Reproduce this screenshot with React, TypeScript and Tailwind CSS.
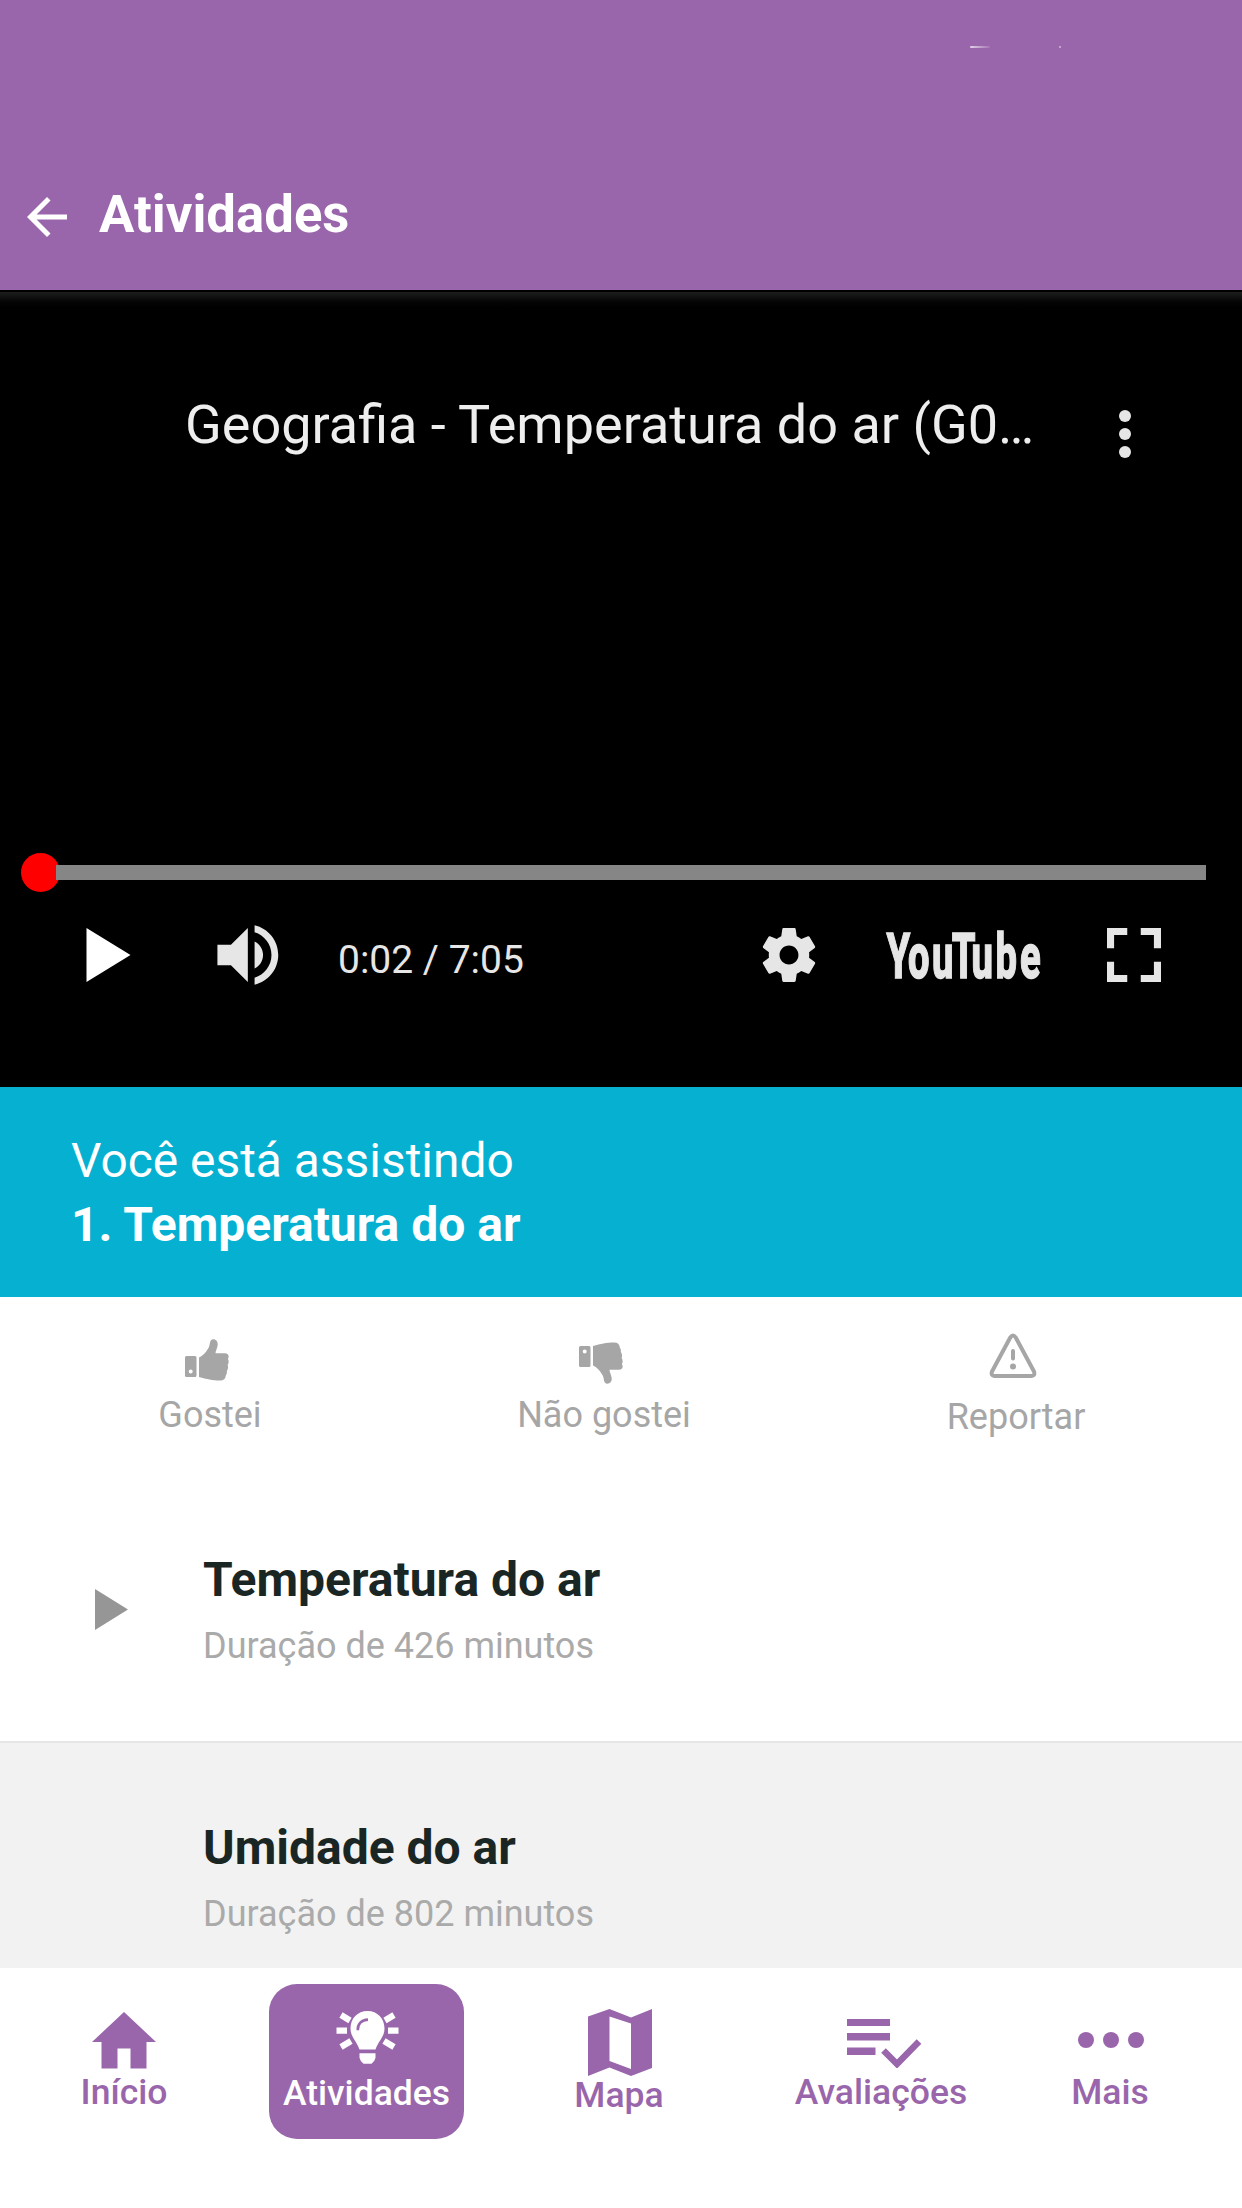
import React from 'react';

interface Lesson {
  title: string;
  minutes: number;
  playing?: boolean;
}

const lessons: Lesson[] = [
  { title: 'Temperatura do ar', minutes: 426, playing: true },
  { title: 'Umidade do ar', minutes: 802 },
];

const Header: React.FC = () => (
  <header className="h-[290px] bg-[#9a66ab] pt-[46px] text-white">
    {/* faint status bar remnants */}
    <div className="flex h-[2px] items-center pl-[970px]">
      <span className="h-[2px] w-[20px] rounded-full bg-linear-to-r from-white/70 to-white/10" />
      <span className="ml-[69px] h-[2px] w-[2px] bg-white/40" />
    </div>
    <div className="flex items-start pl-[17px] pt-[139px]">
      <button type="button" aria-label="Voltar">
        <svg className="h-[60px] w-[60px]" viewBox="0 0 24 24" fill="currentColor">
          <path d="M20 11H7.83l5.59-5.59L12 4l-8 8 8 8 1.41-1.41L7.83 13H20v-2z" />
        </svg>
      </button>
      <h1 className="-mt-[3px] ml-[22px] text-[52.7px] font-bold leading-[60px]">Atividades</h1>
    </div>
  </header>
);

const Player: React.FC = () => (
  <section className="h-[797px] border-t-2 border-black bg-black text-[#e6e6e6]">
    <div className="h-[20px] bg-linear-to-b from-[#1e1e1e] to-black" />

    <div className="flex h-[170px] items-start pl-[185px] pt-[86px]">
      <h2 className="-mt-[5px] w-[904px] whitespace-nowrap text-[54px] leading-[64px] text-[#eeeeee]">Geografia - Temperatura do ar (G0…</h2>
      <svg className="h-[72px] w-[72px]" viewBox="0 0 24 24" fill="currentColor">
        <circle cx="12" cy="6" r="2" />
        <circle cx="12" cy="12" r="2" />
        <circle cx="12" cy="18" r="2" />
      </svg>
    </div>

    <div className="mt-[371px] flex h-[39px] items-center pl-[21px]">
      <div className="h-[39px] w-[39px] rounded-full bg-[#ff0000]" />
      <div className="-ml-1 h-[15px] w-[1150px] bg-[#868686]" />
    </div>

    <div className="mt-[23px] flex h-[80px] items-center">
      <svg className="ml-[86px] h-[54px] w-[45px] shrink-0 text-white" viewBox="0 0 45 54" fill="currentColor">
        <path d="M0.5 0v54L44.5 27z" />
      </svg>
      <svg className="ml-[86px] h-[60px] w-[62px] shrink-0" viewBox="7.9 9.12 18.3 17.76" fill="currentColor">
        <path d="M8,21 L12,21 L17,26 L17,10 L12,15 L8,15 L8,21 Z M19,14 L19,22 C20.48,21.32 21.5,19.77 21.5,18 C21.5,16.26 20.48,14.74 19,14 Z M19,11.29 C21.89,12.15 24,14.83 24,18 C24,21.17 21.89,23.85 19,24.71 L19,26.77 C23.01,25.86 26,22.28 26,18 C26,13.72 23.01,10.14 19,9.23 L19,11.29 Z" />
      </svg>
      <span className="ml-[59px] mt-[10px] w-[424px] shrink-0 text-[39px] leading-[48px]">0:02 / 7:05</span>
      <svg className="h-[54px] w-[54px] shrink-0" viewBox="10 10 16 16" fill="currentColor">
        <path d="m 23.94,18.78 c .03,-0.25 .05,-0.51 .05,-0.78 0,-0.27 -0.02,-0.52 -0.05,-0.78 l 1.68,-1.32 c .15,-0.12 .19,-0.33 .09,-0.51 l -1.6,-2.76 c -0.09,-0.17 -0.31,-0.24 -0.48,-0.17 l -1.99,.8 c -0.41,-0.32 -0.86,-0.58 -1.35,-0.78 l -0.30,-2.12 c -0.02,-0.19 -0.19,-0.33 -0.39,-0.33 l -3.2,0 c -0.2,0 -0.36,.14 -0.39,.33 l -0.30,2.12 c -0.48,.2 -0.93,.47 -1.35,.78 l -1.99,-0.8 c -0.18,-0.07 -0.39,0 -0.48,.17 l -1.6,2.76 c -0.10,.17 -0.05,.39 .09,.51 l 1.68,1.32 c -0.03,.25 -0.05,.52 -0.05,.78 0,.26 .02,.52 .05,.78 l -1.68,1.32 c -0.15,.12 -0.19,.33 -0.09,.51 l 1.6,2.76 c .09,.17 .31,.24 .48,.17 l 1.99,-0.8 c .41,.32 .86,.58 1.35,.78 l .30,2.12 c .02,.19 .19,.33 .39,.33 l 3.2,0 c .2,0 .36,-0.14 .39,-0.33 l .30,-2.12 c .48,-0.2 .93,-0.47 1.35,-0.78 l 1.99,.8 c .18,.07 .39,0 .48,-0.17 l 1.6,-2.76 c .09,-0.17 .05,-0.39 -0.09,-0.51 l -1.68,-1.32 z m -5.94,2.01 c -1.54,0 -2.8,-1.25 -2.8,-2.8 0,-1.54 1.25,-2.8 2.8,-2.8 1.54,0 2.8,1.25 2.8,2.8 0,1.54 -1.25,2.8 -2.8,2.8 z" />
      </svg>
      {/* condensed wordmark: glyphs squeezed and spaced one by one */}
      <svg className="ml-[65px] h-[80px] w-[166px] shrink-0 overflow-visible" viewBox="0 0 166 80">
        <text
          transform="scale(0.6 1)"
          x="9 45 85 118 151 191 231.500"
          y="63"
          fill="currentColor"
          stroke="currentColor"
          strokeWidth="1.4"
          className="font-['Roboto',sans-serif] text-[63.5px] font-extrabold"
        >
          YouTube
        </text>
      </svg>
      <svg className="ml-[60px] h-[54px] w-[54px] shrink-0" viewBox="0 0 16 16" fill="currentColor">
        <path d="M0 0h6v2.1H2.1V6H0zM10 0h6v6h-2.1V2.1H10zM0 10h2.1v3.9H6V16H0zM13.9 10H16v6h-6v-2.1h3.9z" />
      </svg>
    </div>
  </section>
);

const NowWatching: React.FC = () => (
  <section className="h-[210px] bg-[#06b0d1] pl-[71px] pt-[42px] text-[48px] leading-[64px] text-white">
    <p className="text-[47.9px]">Você está assistindo</p>
    <p className="font-bold">1. Temperatura do ar</p>
  </section>
);

const Thumb: React.FC = () => (
  <>
    <path d="M1.5 17h8.500q1.500 0 1.500 1.500v18q0 1.500-1.500 1.500h-8.500q-1.500 0-1.500-1.500v-18q0-1.500 1.500-1.500zM5.700 30.500a2 2 0 1 0 0 4a2 2 0 1 0 0-4z" fillRule="evenodd" />
    <path d="M14 18.500c4-1.500 8-6.500 10-10.500c1.200-3 .5-7.500 4.200-7.700c3.500 0 5 3.200 4.400 6.200c-.5 3-2 5.500-2.100 7.800h9.500c3.500 0 4.500 3 2.900 5.700c1.200 2 .9 4.500-.3 6c.9 2 .3 4.500-.8 5.900c.3 2-.2 3.400-1 4.500c-.4 3.500-2 5.100-5.500 5.100c-8.300 0-13.300-1.300-21.300-3.500z" />
  </>
);

const Feedback: React.FC = () => (
  <section className="flex h-[190px] text-[36px] leading-[44px] text-[#a6a6a6]">
    <button type="button" className="ml-[110px] flex w-[200px] flex-col items-center pt-[42px]">
      <svg className="mr-[6px] h-[42px] w-[44px]" viewBox="0 0 44 42" fill="currentColor">
        <Thumb />
      </svg>
      <span className="mt-[12px]">Gostei</span>
    </button>
    <button type="button" className="ml-[194px] flex w-[200px] flex-col items-center pt-[45px]">
      <svg className="mr-[6px] h-[42px] w-[44px]" viewBox="0 0 44 42" fill="currentColor">
        <g transform="matrix(1 0 0 -1 0 42)">
          <Thumb />
        </g>
      </svg>
      <span className="mt-[9px]">Não gostei</span>
    </button>
    <button type="button" className="ml-[212px] flex w-[200px] flex-col items-center pt-[36px]">
      <svg className="mr-[6px] h-[46px] w-[48px]" viewBox="0 0 48 46" fill="none" stroke="currentColor" strokeWidth="4" strokeLinejoin="round" strokeLinecap="round">
        <path d="M21.400 4.300Q24 .5 26.600 4.300L45 38.500Q46.300 43 42.500 43H5.500Q1.700 43 3 38.500z" />
        <path d="M24 18v7.500" />
        <circle cx="24" cy="33.500" r="3" fill="currentColor" stroke="none" />
      </svg>
      <span className="mt-[16px]">Reportar</span>
    </button>
  </section>
);

const LessonRow: React.FC<{ lesson: Lesson }> = ({ lesson }) => (
  <article className={lesson.playing ? 'flex h-[254px] pt-[61px]' : 'flex h-[227px] border-t-2 border-[#e6e6e6] bg-[#f2f2f2] pt-[73px]'}>
    <div className="w-[203px] shrink-0 pl-[95px] pt-[41px]">
      {lesson.playing && (
        <svg className="h-[41px] w-[33px]" viewBox="0 0 33 41" fill="#969696">
          <path d="M0 0v41L33 20.500z" />
        </svg>
      )}
    </div>
    <div>
      <h3 className="text-[48px] font-bold leading-[64px] text-[#1a2624]">{lesson.title}</h3>
      <p className="text-[36px] leading-[68px] text-[#aaaaaa]">{`Duração de ${lesson.minutes} minutos`}</p>
    </div>
  </article>
);

const BottomNav: React.FC = () => (
  <nav className="flex h-[240px] bg-white pt-[16px] text-[35.5px] font-medium leading-[44px] text-[#9a66ab]">
    <a className="ml-[26px] flex w-[196px] flex-col items-center pt-[28px]">
      <svg className="h-[57px] w-[64px]" viewBox="0 0 64 57" fill="currentColor">
        <path d="M32 0L64 30H54.500V56.500H38.500V36.500H25.500V56.500H9.500V30H0z" />
      </svg>
      <span className="mt-[1px]">Início</span>
    </a>
    <a className="ml-[47px] flex h-[155px] w-[195px] flex-col items-center rounded-[28px] bg-[#9a66ab] pt-[27px] text-white">
      <svg className="ml-[2px] h-[53px] w-[63px]" viewBox="0 0 63 53" fill="currentColor">
        <path d="M31.500 0C41.500 0 48.500 7.500 48.500 17.500C48.500 26 42.500 29.500 39.500 38.500H23.500C20.500 29.500 14.500 26 14.500 17.500C14.500 7.500 21.500 0 31.500 0z" />
        <path d="M23.500 42.300h16v4.500q-.8 4-4 6h-8q-3.200-2-4-6z" />
        <path d="M21.800 19.200C21.500 13 25.500 8.800 32 8.600" fill="none" stroke="#9a66ab" strokeWidth="2.600" />
        <g stroke="currentColor" strokeWidth="6.200">
          <path d="M.5 19.700H11M52 19.700H62.500M5 4l9 5.500M58 4l-9 5.500M5 36l10-6M58 36l-10-6" />
        </g>
      </svg>
      <span className="mt-[7px]">Atividades</span>
    </a>
    <a className="ml-[57px] flex w-[196px] flex-col items-center pt-[25px]">
      <svg className="ml-[2px] h-[67px] w-[64px]" viewBox="0 0 64 67" fill="currentColor">
        <path fillRule="evenodd" d="M0 7.500L21.500 0L43 8.500L64 0V59L43 67L21.500 58.500L0 67zM21.500 7.500V52L43 60V14.500z" />
      </svg>
      <span className="-mt-[3px]">Mapa</span>
    </a>
    <a className="ml-[64px] flex w-[200px] flex-col items-center pt-[35px]">
      <svg className="ml-[6px] h-[49px] w-[75px]" viewBox="0 0 75 49" fill="currentColor">
        <path d="M0 0h43v7H0zM0 14h43v7.500H0zM0 28.500h28.500v7.500H0z" />
        <path d="M36.500 31.500L50 45L72 22.500" fill="none" stroke="currentColor" strokeWidth="6.500" />
      </svg>
      <span className="mt-[2px]">Avaliações</span>
    </a>
    <a className="ml-[29px] flex w-[200px] flex-col items-center pt-[47px]">
      <svg className="ml-[1px] h-[18px] w-[66px]" viewBox="0 0 66 18" fill="currentColor">
        <circle cx="8" cy="9" r="8" />
        <circle cx="33" cy="9" r="8" />
        <circle cx="58" cy="9" r="8" />
      </svg>
      <span className="mt-[21px]">Mais</span>
    </a>
  </nav>
);

const App: React.FC = () => (
  <div className="flex h-[2208px] w-[1242px] flex-col overflow-hidden bg-white font-['Roboto',sans-serif]">
    <Header />
    <Player />
    <NowWatching />
    <Feedback />
    {lessons.map((lesson) => (
      <LessonRow key={lesson.title} lesson={lesson} />
    ))}
    <BottomNav />
  </div>
);

export default App;
